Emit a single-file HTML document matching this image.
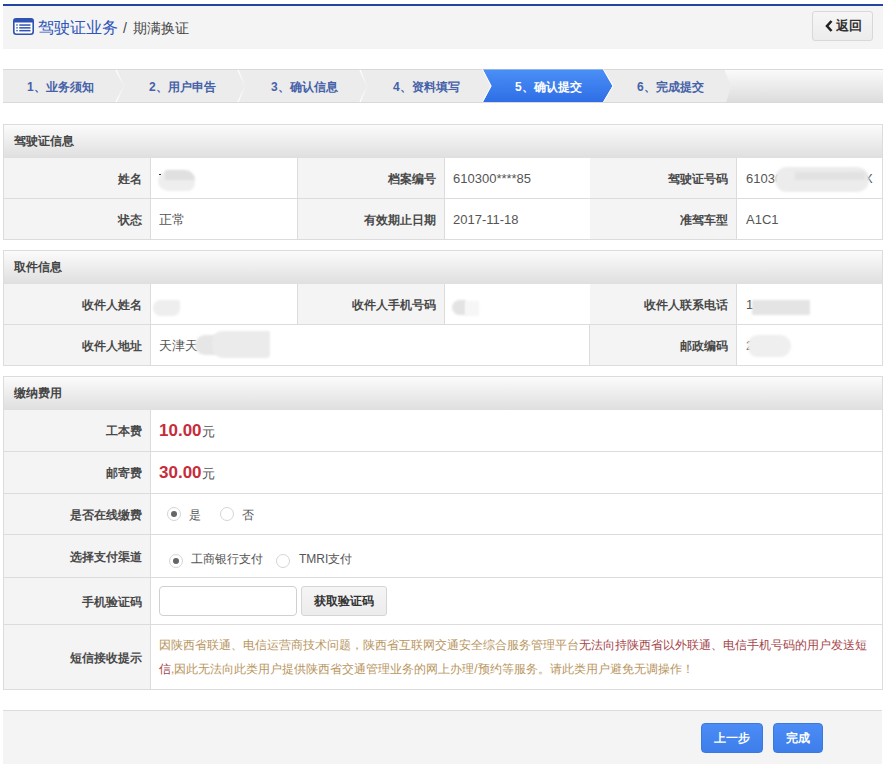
<!DOCTYPE html>
<html><head><meta charset="utf-8">
<style>
*{box-sizing:border-box;margin:0;padding:0}
html,body{width:887px;height:768px;overflow:hidden;background:#fff;font-family:"Liberation Sans",sans-serif;color:#333}
.abs{position:absolute}
#topline{left:3px;top:4px;width:880px;height:2px;background:#2444a3}
#hdr{left:3px;top:6px;width:880px;height:43px;background:#f4f4f4}
#title{left:38px;top:17px;font-size:16px;line-height:22px;color:#2f55b8;white-space:nowrap}
#title span{font-size:14px;color:#444}
#back{left:812px;top:11px;width:61px;height:30px;border:1px solid #d8d8d8;border-radius:3px;background:linear-gradient(#f6f6f6,#ececec)}
#back .t{position:absolute;left:23px;top:6px;font-size:13px;line-height:16px;font-weight:bold;color:#333}
#steps{left:3px;top:69px;width:880px;height:34px}
.st{position:absolute;top:11px;font-size:12px;line-height:14px;font-weight:bold;color:#4562a8;white-space:nowrap}
.box{position:absolute;left:3px;width:880px;border:1px solid #dcdcdc;background:#fff}
.bh{position:absolute;left:0;top:0;width:878px;height:33px;background:linear-gradient(#fbfbfb,#dfdfdf)}
.bh span{position:absolute;left:10px;top:9px;font-size:12px;line-height:14px;font-weight:bold;color:#444}
.row{position:absolute;left:0;width:878px;background:#fff}
.bt{border-top:1px solid #dcdcdc}
.lab{position:absolute;top:0;bottom:0;background:#f4f4f4;border-right:1px solid #dcdcdc}
.lab span{position:absolute;right:8px;top:50%;margin-top:-6px;font-size:12px;line-height:14px;font-weight:bold;color:#484848;white-space:nowrap}
.val{position:absolute;top:50%;margin-top:-7px;font-size:13px;line-height:16px;color:#555;white-space:nowrap}
.vb{position:absolute;top:0;bottom:0;border-right:1px solid #dcdcdc}
.blob{position:absolute;background:#e6e6e6;border-radius:10px;filter:blur(0.8px)}
.price{font-size:17px;font-weight:bold;color:#c72c3b}
.radio{position:absolute;width:14px;height:14px;border:1px solid #d5d5d5;border-radius:50%;background:#fff}
.radio.on:after{content:"";position:absolute;left:3px;top:3px;width:6px;height:6px;border-radius:50%;background:#666}
.rt{position:absolute;font-size:12px;line-height:14px;color:#555;white-space:nowrap}
#ftr{left:3px;top:710px;width:879px;height:54px;border-top:1px solid #dcdcdc;background:#f4f4f4}
.btn{position:absolute;top:723px;height:30px;border:1px solid #3b78e0;border-radius:4px;background:linear-gradient(#4b8cf5,#3d7eea);color:#fff;font-size:12px;font-weight:bold;line-height:28px;text-align:center}
.note{position:absolute;left:9px;font-size:12px;line-height:24px;color:#b8955e;white-space:nowrap}
.note b{font-weight:normal;color:#a5454a}
</style></head><body>
<div id="topline" class="abs"></div>
<div id="hdr" class="abs"></div>
<svg class="abs" style="left:13px;top:18px" width="21" height="17" viewBox="0 0 21 17">
<rect x="0.8" y="0.8" width="19.4" height="15.4" rx="2.5" fill="#fff" stroke="#2f52b3" stroke-width="1.6"/>
<rect x="0.8" y="0.8" width="19.4" height="3.6" rx="1" fill="#2f52b3"/>
<rect x="3.3" y="6.3" width="1.4" height="1.4" fill="#2f52b3"/><rect x="6.3" y="6.3" width="11.2" height="1.5" fill="#2f52b3"/>
<rect x="3.3" y="9.1" width="1.4" height="1.4" fill="#2f52b3"/><rect x="6.3" y="9.1" width="11.2" height="1.5" fill="#2f52b3"/>
<rect x="3.3" y="11.9" width="1.4" height="1.4" fill="#2f52b3"/><rect x="6.3" y="11.9" width="11.2" height="1.5" fill="#2f52b3"/>
</svg>
<div id="title" class="abs">驾驶证业务</div><div class="abs" style="left:123px;top:18px;font-size:14px;line-height:20px;color:#444">/</div><div class="abs" style="left:133px;top:18px;font-size:14px;line-height:20px;color:#444">期满换证</div>
<div id="back" class="abs">
<svg style="position:absolute;left:12px;top:8px" width="8" height="12" viewBox="0 0 8 12"><path d="M6.5 1 L2 6 L6.5 11" fill="none" stroke="#222" stroke-width="2.6"/></svg>
<span class="t">返回</span></div>

<div id="steps" class="abs">
<svg class="abs" style="left:0;top:0" width="880" height="34" viewBox="0 0 880 34">
<defs>
<linearGradient id="gt" x1="0" y1="0" x2="0" y2="1"><stop offset="0" stop-color="#fbfbfb"/><stop offset="1" stop-color="#dcdcdc"/></linearGradient>
<linearGradient id="g5" x1="0" y1="0" x2="0" y2="1"><stop offset="0" stop-color="#4a8ff6"/><stop offset="1" stop-color="#2f6ee6"/></linearGradient>
<linearGradient id="gs" x1="0" y1="0" x2="0" y2="1"><stop offset="0" stop-color="#fff" stop-opacity="1"/><stop offset="0.5" stop-color="#fff" stop-opacity="0.1"/><stop offset="1" stop-color="#fff" stop-opacity="1"/></linearGradient>
</defs>
<rect x="0" y="0" width="880" height="34" fill="url(#gt)"/>
<polygon points="0,0 721,0 728,17 723,34 0,34" fill="#ececec"/>
<rect x="0" y="0" width="880" height="1" fill="#d9d9d9"/>
<rect x="0" y="33" width="880" height="1" fill="#d9d9d9"/>
<polyline points="113,1 121,17 113,33" fill="none" stroke="url(#gs)" stroke-width="1.3"/>
<polyline points="235,1 242,17 235,33" fill="none" stroke="url(#gs)" stroke-width="1.3"/>
<polyline points="357,1 364,17 357,33" fill="none" stroke="url(#gs)" stroke-width="1.3"/>
<polygon points="480,0.5 600,0.5 609.5,17 600,33 480,33 488.5,17" fill="url(#g5)"/>
<polyline points="479.5,0.5 488,17 479.5,33" fill="none" stroke="#fff" stroke-width="1"/>
<polyline points="600.5,0.5 610,17 600.5,33" fill="none" stroke="#fff" stroke-width="1"/>
</svg>
<span class="st" style="left:24px">1、业务须知</span>
<span class="st" style="left:146px">2、用户申告</span>
<span class="st" style="left:268px">3、确认信息</span>
<span class="st" style="left:390px">4、资料填写</span>
<span class="st" style="left:512px;color:#fff">5、确认提交</span>
<span class="st" style="left:634px">6、完成提交</span>
</div>

<!-- section 1 -->
<div class="box" style="top:124px;height:116px">
<div class="bh"><span>驾驶证信息</span></div>
<div class="row" style="top:33px;height:40px">
 <div class="lab" style="left:0;width:147px"><span>姓名</span></div>
 <div class="vb" style="left:147px;width:147px"></div>
 <div class="lab" style="left:294px;width:147px"><span>档案编号</span></div>
 <div class="val" style="left:449px">610300****85</div>
 <div class="lab" style="left:586px;width:147px"><span>驾驶证号码</span></div>
 <div class="val" style="left:742px">61030</div>
</div>
<div class="row bt" style="top:73px;height:41px">
 <div class="lab" style="left:0;width:147px"><span>状态</span></div>
 <div class="val" style="left:155px;font-size:12.5px">正常</div>
 <div class="vb" style="left:147px;width:147px"></div>
 <div class="lab" style="left:294px;width:147px"><span>有效期止日期</span></div>
 <div class="val" style="left:449px">2017-11-18</div>
 <div class="lab" style="left:586px;width:147px"><span>准驾车型</span></div>
 <div class="val" style="left:742px">A1C1</div>
</div>
</div>
<div class="blob" style="left:158px;top:171px;width:37px;height:20px;border-radius:10px 12px 8px 10px;background:#eeeeee"></div>
<div class="blob" style="left:165px;top:170px;width:30px;height:10px;border-radius:2px 10px 0 0;background:#e0e0e0"></div>
<div class="abs" style="left:159px;top:174px;width:2px;height:1px;background:#333"></div>
<div class="val" style="left:864px;top:171px;margin-top:0">X</div>
<div class="blob" style="left:775px;top:167px;width:94px;height:25px;border-radius:12px;background:#ececec"></div>
<div class="blob" style="left:795px;top:172px;width:70px;height:8px;border-radius:1px;background:#e2e2e2"></div>
<!-- section 2 -->
<div class="box" style="top:250px;height:116px">
<div class="bh"><span>取件信息</span></div>
<div class="row" style="top:33px;height:40px">
 <div class="lab" style="left:0;width:147px"><span>收件人姓名</span></div>
 <div class="vb" style="left:147px;width:147px"></div>
 <div class="lab" style="left:294px;width:147px"><span>收件人手机号码</span></div>
 <div class="lab" style="left:586px;width:147px"><span>收件人联系电话</span></div>
 <div class="val" style="left:742px">1</div>
</div>
<div class="row bt" style="top:73px;height:41px">
 <div class="lab" style="left:0;width:147px"><span>收件人地址</span></div>
 <div class="val" style="left:155px;font-size:12.5px">天津天</div>
 <div class="vb" style="left:147px;width:439px"></div>
 <div class="lab" style="left:586px;width:147px"><span>邮政编码</span></div>
 <div class="val" style="left:742px">2</div>
</div>
</div>
<div class="blob" style="left:153px;top:300px;width:27px;height:16px;border-radius:9px 2px 8px 9px;background:#eeeeee"></div>
<div class="blob" style="left:452px;top:300px;width:14px;height:15px;border-radius:8px 1px 1px 8px;background:#e3e3e3"></div>
<div class="blob" style="left:465px;top:301px;width:14px;height:15px;border-radius:1px;background:#f6f6f6"></div>
<div class="blob" style="left:752px;top:300px;width:58px;height:15px;border-radius:1px;background:#e4e4e4"></div>
<div class="blob" style="left:195px;top:335px;width:30px;height:20px;border-radius:10px;background:#e6e6e6"></div>
<div class="blob" style="left:212px;top:331px;width:58px;height:27px;border-radius:10px 2px 4px 12px;background:#ebebeb"></div>
<div class="blob" style="left:748px;top:335px;width:43px;height:22px;border-radius:10px 12px 12px 10px;background:#efefef"></div>

<!-- section 3 -->
<div class="box" style="top:376px;height:314px">
<div class="bh"><span>缴纳费用</span></div>
<div class="row" style="top:33px;height:41px">
 <div class="lab" style="left:0;width:147px"><span style="margin-top:-7px">工本费</span></div>
 <div class="val" style="left:155px;margin-top:-10px;line-height:20px"><span class="price">10.00</span>元</div>
</div>
<div class="row bt" style="top:74px;height:42px">
 <div class="lab" style="left:0;width:147px"><span style="margin-top:-7px">邮寄费</span></div>
 <div class="val" style="left:155px;margin-top:-10px;line-height:20px"><span class="price">30.00</span>元</div>
</div>
<div class="row bt" style="top:116px;height:41px">
 <div class="lab" style="left:0;width:147px"><span>是否在线缴费</span></div>
 <div class="radio on" style="left:163px;top:13px"></div><span class="rt" style="left:185px;top:14px">是</span>
 <div class="radio" style="left:216px;top:13px"></div><span class="rt" style="left:238px;top:14px">否</span>
</div>
<div class="row bt" style="top:157px;height:43px">
 <div class="lab" style="left:0;width:147px"><span>选择支付渠道</span></div>
 <div class="radio on" style="left:165px;top:19px"></div><span class="rt" style="left:187px;top:17px">工商银行支付</span>
 <div class="radio" style="left:272px;top:19px"></div><span class="rt" style="left:295px;top:17px">TMRI支付</span>
</div>
<div class="row bt" style="top:200px;height:47px">
 <div class="lab" style="left:0;width:147px"><span>手机验证码</span></div>
 <div class="abs" style="left:155px;top:8px;width:138px;height:30px;border:1px solid #d0d0d0;border-radius:4px;background:#fff"></div>
 <div class="abs" style="left:297px;top:8px;width:86px;height:30px;border:1px solid #d5d5d5;border-radius:3px;background:linear-gradient(#f5f5f5,#ececec);font-size:12px;font-weight:bold;line-height:28px;text-align:center;color:#333">获取验证码</div>
</div>
<div class="row bt" style="top:247px;height:65px">
 <div class="lab" style="left:0;width:147px"><span>短信接收提示</span></div>
 <div class="note" style="left:155px;top:8px">因陕西省联通、电信运营商技术问题，陕西省互联网交通安全综合服务管理平台<b>无法向持陕西省以外联通、电信手机号码的用户发送短</b></div>
 <div class="note" style="left:155px;top:32px"><b>信</b>,因此无法向此类用户提供陕西省交通管理业务的网上办理/预约等服务。请此类用户避免无调操作！</div>
</div>
</div>

<div id="ftr" class="abs"></div>
<div class="btn" style="left:701px;width:62px">上一步</div>
<div class="btn" style="left:773px;width:50px">完成</div>
</body></html>
